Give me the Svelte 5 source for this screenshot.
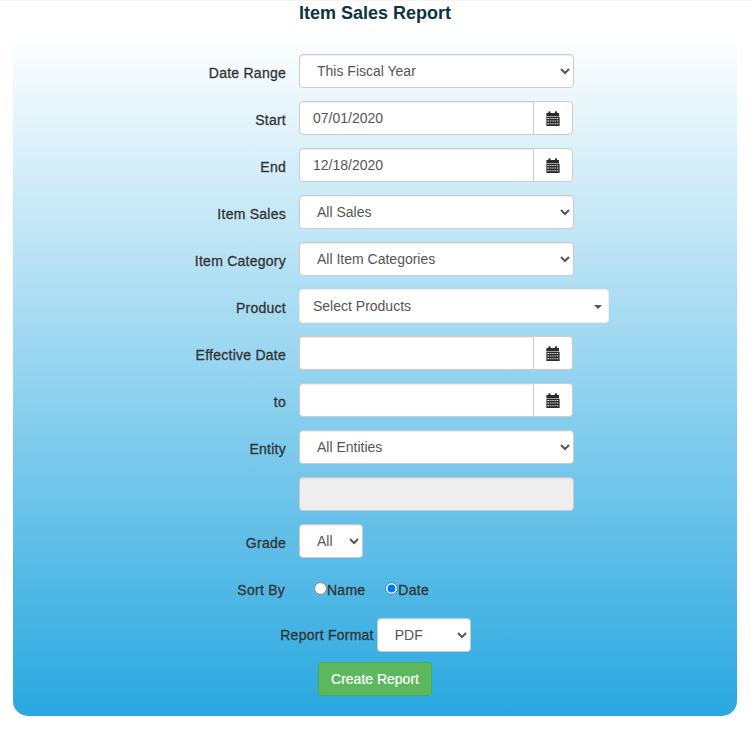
<script>
	let range = $state('This Fiscal Year');
	let sales = $state('All Sales');
	let category = $state('All Item Categories');
	let entity = $state('All Entities');
	let grade = $state('All');
	let format = $state('PDF');
	let sortBy = $state('date');
	let start = $state('07/01/2020');
	let end = $state('12/18/2020');
	let effective = $state('');
	let effectiveTo = $state('');
</script>

{#snippet calendar()}
	<span class="addon">
		<svg width="14" height="15" viewBox="0 0 14 15" aria-hidden="true">
			<path fill="#2b2b2b" d="M.4 2h2V.9c0-.4.3-.7.7-.7h.7c.4 0 .7.3.7.7V2h4.4V.9c0-.4.3-.7.7-.7h.7c.4 0 .7.3.7.7V2h2v3.2H.4z" />
			<path fill="#2b2b2b" fill-rule="evenodd" d="M.4 5.8h13.2V15H.4zM1.4 7v1h1.8V7zm2.8 0v1h1.2V7zm2.2 0v1h1.2V7zm2.2 0v1h1.2V7zm2.2 0v1h1.4V7zM1.4 9.6v1h1.8v-1zm2.8 0v1h1.2v-1zm2.2 0v1h1.2v-1zm2.2 0v1h1.2v-1zm2.2 0v1h1.4v-1zM1.4 12.2v1h1.8v-1zm2.8 0v1h1.2v-1zm2.2 0v1h1.2v-1zm2.2 0v1h1.2v-1zm2.2 0v1h1.4v-1z" />
		</svg>
	</span>
{/snippet}

<div class="page">
	<h1>Item Sales Report</h1>

	<form class="panel" onsubmit={(e) => e.preventDefault()}>
		<div class="row">
			<label class="side" for="range">Date Range</label>
			<select id="range" class="control wide" bind:value={range}>
				<option>This Fiscal Year</option>
				<option>Last Fiscal Year</option>
				<option>Custom</option>
			</select>
		</div>

		<div class="row">
			<label class="side" for="start">Start</label>
			<div class="input-group">
				<input id="start" class="control" bind:value={start} />
				{@render calendar()}
			</div>
		</div>

		<div class="row">
			<label class="side" for="end">End</label>
			<div class="input-group">
				<input id="end" class="control" bind:value={end} />
				{@render calendar()}
			</div>
		</div>

		<div class="row">
			<label class="side" for="sales">Item Sales</label>
			<select id="sales" class="control wide" bind:value={sales}>
				<option>All Sales</option>
			</select>
		</div>

		<div class="row">
			<label class="side" for="category">Item Category</label>
			<select id="category" class="control wide" bind:value={category}>
				<option>All Item Categories</option>
			</select>
		</div>

		<div class="row">
			<label class="side" for="product">Product</label>
			<button id="product" type="button" class="multi">
				<span>Select Products</span>
				<span class="caret"></span>
			</button>
		</div>

		<div class="row">
			<label class="side" for="effective">Effective Date</label>
			<div class="input-group">
				<input id="effective" class="control" bind:value={effective} />
				{@render calendar()}
			</div>
		</div>

		<div class="row">
			<label class="side" for="effective-to">to</label>
			<div class="input-group">
				<input id="effective-to" class="control" bind:value={effectiveTo} />
				{@render calendar()}
			</div>
		</div>

		<div class="row">
			<label class="side" for="entity">Entity</label>
			<select id="entity" class="control wide" bind:value={entity}>
				<option>All Entities</option>
			</select>
		</div>

		<div class="row">
			<span class="side"></span>
			<input class="control wide" disabled aria-label="Entity detail" />
		</div>

		<div class="row">
			<label class="side" for="grade">Grade</label>
			<select id="grade" class="control grade" bind:value={grade}>
				<option>All</option>
			</select>
		</div>

		<div class="row sort">
			<span class="side">Sort By</span>
			<label class="radio name"><input type="radio" bind:group={sortBy} value="name" />Name</label>
			<label class="radio"><input type="radio" bind:group={sortBy} value="date" />Date</label>
		</div>

		<div class="format">
			<label for="format">Report Format</label>
			<select id="format" class="control" bind:value={format}>
				<option>PDF</option>
				<option>Excel</option>
			</select>
		</div>

		<div class="actions">
			<button type="submit" class="create">Create Report</button>
		</div>
	</form>
</div>

<style>
	:global(body) {
		background: #fff;
	}
	.page {
		height: 729px;
		box-sizing: border-box;
		padding: 0 14px 0 13px;
		border-top: 1px solid #f5f5f5;
		font-family: 'Liberation Sans', Arial, sans-serif;
		font-size: 14px;
		color: #333;
	}
	h1 {
		margin: 0;
		height: 32px;
		padding-top: 2px;
		box-sizing: border-box;
		font-size: 18px;
		line-height: 20px;
		font-weight: 700;
		text-align: center;
		color: #0d3442;
	}
	.panel {
		height: 683px;
		box-sizing: border-box;
		padding-top: 21px;
		border-radius: 0 0 15px 15px;
		background: linear-gradient(to bottom, #fff, #29a8e0);
	}
	.row {
		display: flex;
		align-items: center;
		gap: 13px;
		height: 34px;
		margin-bottom: 13px;
	}
	.side,
	.radio,
	.format label {
		color: #333;
		-webkit-text-stroke: 0.3px #333;
		letter-spacing: 0.25px;
	}
	.side {
		flex: 0 0 273px;
		box-sizing: border-box;
		min-height: 1px;
		padding-top: 3px;
		text-align: right;
	}
	.control {
		box-sizing: border-box;
		height: 34px;
		padding: 6px 12px;
		border: 1px solid #ccc;
		border-radius: 4px;
		background-color: #fff;
		font: inherit;
		color: #555;
		box-shadow: inset 0 1px 1px rgba(0, 0, 0, 0.075);
	}
	select.control,
	input.control {
		padding-left: 13px;
	}
	.wide {
		width: 275px;
	}
	.grade {
		width: 64px;
	}
	input.control:disabled {
		background: #eee;
	}
	.input-group {
		display: flex;
		width: 274px;
	}
	.input-group .control {
		flex: 1;
		min-width: 0;
		border-radius: 4px 0 0 4px;
	}
	.addon {
		display: flex;
		align-items: center;
		justify-content: center;
		box-sizing: border-box;
		width: 40px;
		margin-left: -1px;
		padding-top: 1px;
		border: 1px solid #ccc;
		border-radius: 0 4px 4px 0;
		background: #fff;
	}
	.multi {
		display: flex;
		align-items: center;
		justify-content: space-between;
		box-sizing: border-box;
		width: 310px;
		height: 34px;
		padding: 6px 6px 6px 13px;
		border: 1px solid #eee;
		border-radius: 4px;
		background: #fff;
		font: inherit;
		color: #555;
	}
	.caret {
		border-top: 4px solid #555;
		border-left: 4px solid transparent;
		border-right: 4px solid transparent;
		margin-top: 2px;
	}
	.sort {
		gap: 0;
	}
	.sort .side {
		flex-basis: 272px;
		padding-top: 4px;
	}
	.radio {
		display: flex;
		align-items: center;
		padding-top: 4px;
	}
	.radio.name {
		margin-left: 29px;
		margin-right: 20px;
	}
	.radio input {
		margin: 0;
		width: 13px;
		height: 13px;
		position: relative;
		top: -2px;
	}
	.format {
		display: flex;
		justify-content: center;
		align-items: center;
		gap: 3px;
		height: 34px;
		margin-bottom: 10px;
		padding-left: 1px;
	}
	.format label {
		padding-bottom: 1px;
	}
	.format select {
		width: 94px;
	}
	.actions {
		display: flex;
		justify-content: center;
	}
	.create {
		box-sizing: border-box;
		width: 114px;
		height: 34px;
		border: 1px solid #4cae4c;
		border-radius: 4px;
		background: #5cb85c;
		font: inherit;
		color: #fff;
		padding: 6px 12px;
		-webkit-text-stroke: 0.2px #fff;
	}
</style>
